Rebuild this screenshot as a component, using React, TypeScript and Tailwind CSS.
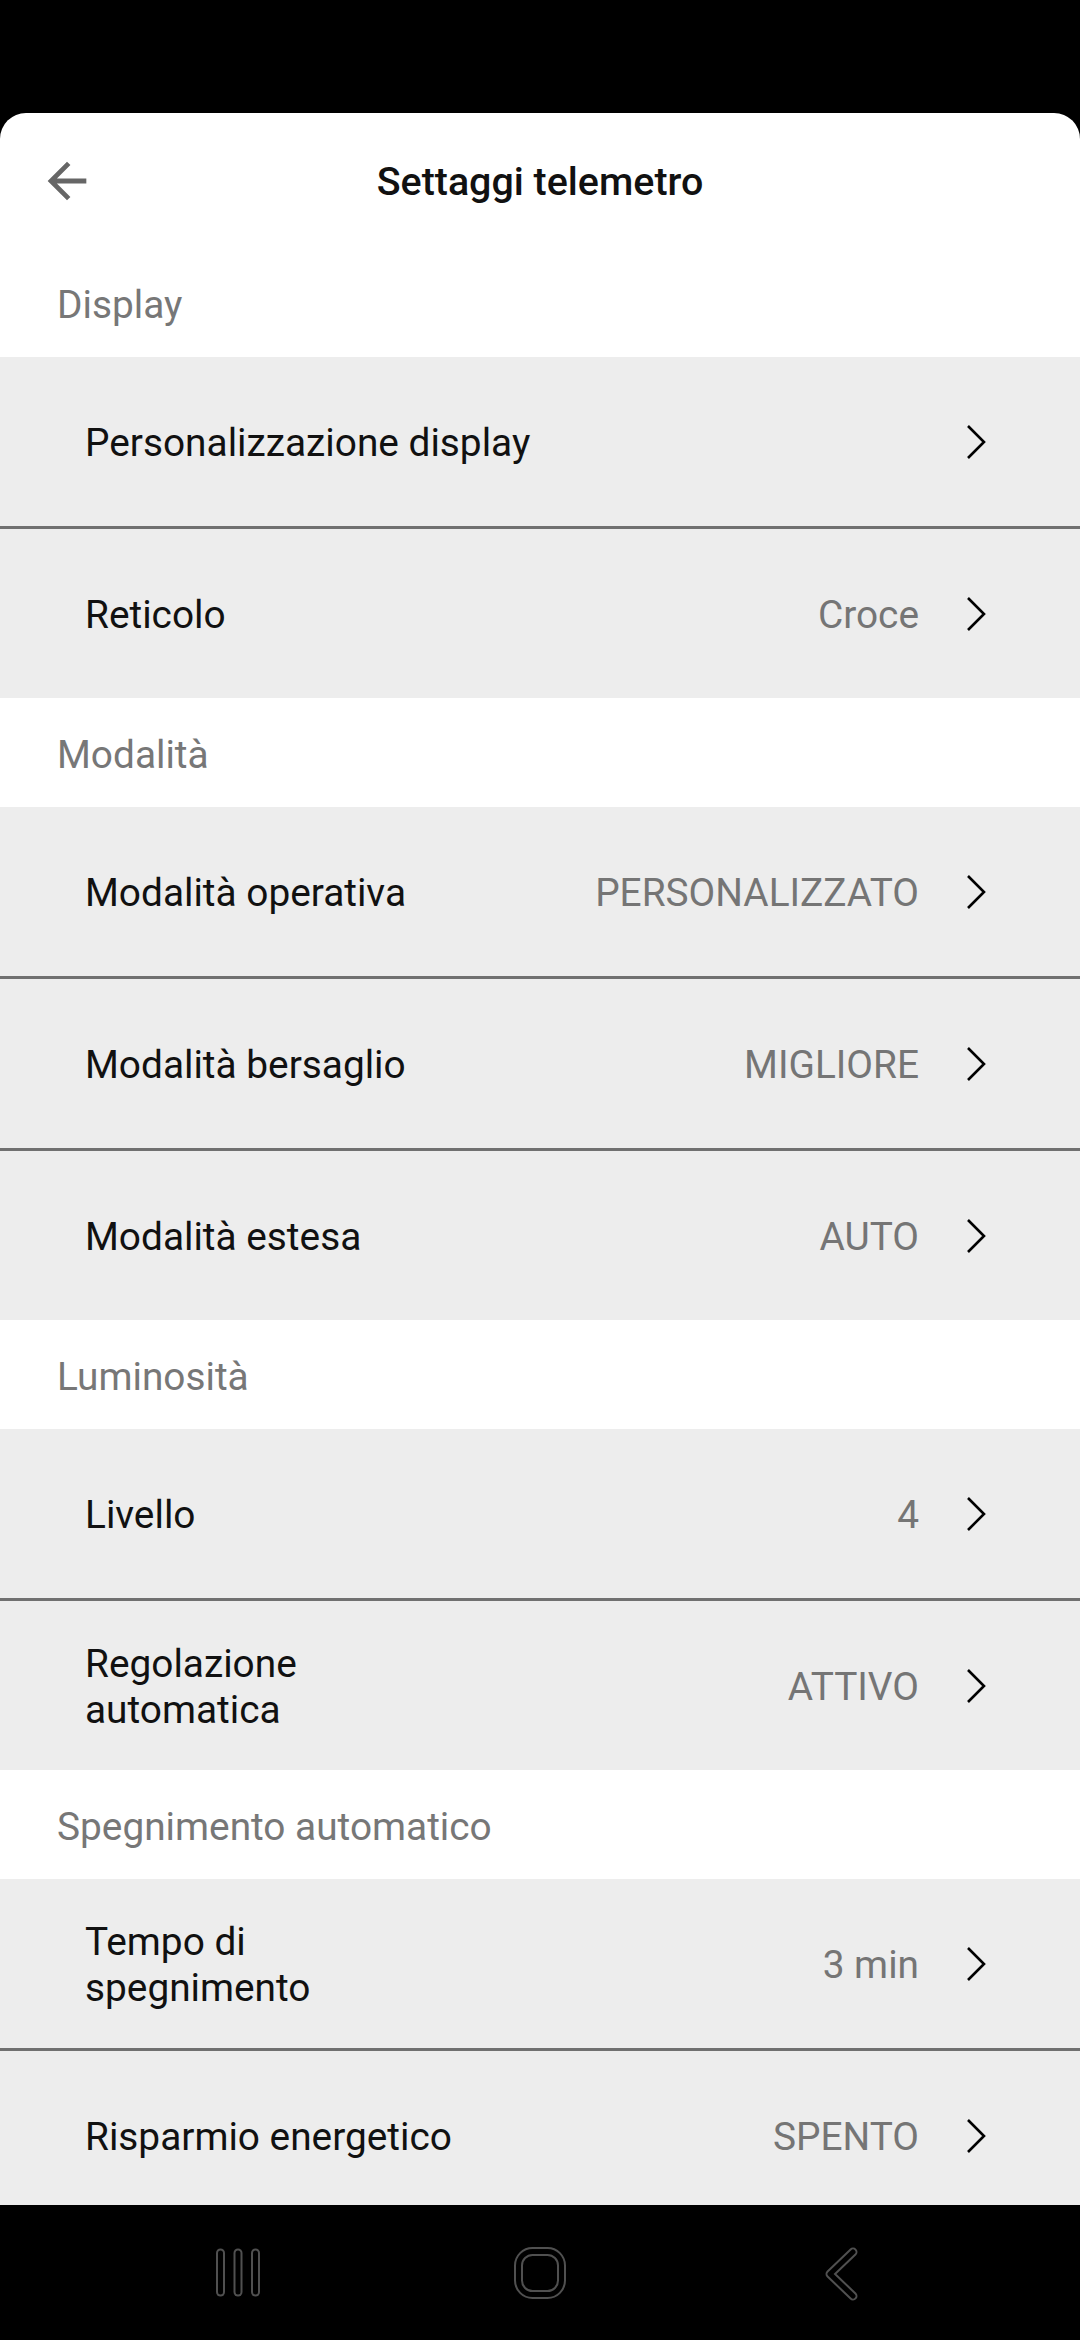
import React from 'react';

type Row = { label: string; value?: string };
type Section = { title: string; rows: Row[] };

const sections: Section[] = [
  {
    title: 'Display',
    rows: [{ label: 'Personalizzazione display' }, { label: 'Reticolo', value: 'Croce' }],
  },
  {
    title: 'Modalità',
    rows: [
      { label: 'Modalità operativa', value: 'PERSONALIZZATO' },
      { label: 'Modalità bersaglio', value: 'MIGLIORE' },
      { label: 'Modalità estesa', value: 'AUTO' },
    ],
  },
  {
    title: 'Luminosità',
    rows: [
      { label: 'Livello', value: '4' },
      { label: 'Regolazione automatica', value: 'ATTIVO' },
    ],
  },
  {
    title: 'Spegnimento automatico',
    rows: [
      { label: 'Tempo di spegnimento', value: '3 min' },
      { label: 'Risparmio energetico', value: 'SPENTO' },
    ],
  },
];

function Chevron() {
  return (
    <svg width="22" height="36" viewBox="0 0 22 36" className="shrink-0">
      <polyline points="3,2 19,18 3,34" fill="none" stroke="#000" strokeWidth="2.6" />
    </svg>
  );
}

function SettingRow({ row }: { row: Row }) {
  return (
    <div className="flex h-[169px] items-center bg-[#ededed] pl-[85px] pr-[93px]">
      <div className={`pt-[3px] text-[#111] leading-[46px] ${row.value ? 'max-w-[380px]' : ''}`}>{row.label}</div>
      <div className="flex-1" />
      {row.value && <div className="pt-[3px] text-[#757575] mr-[46px]">{row.value}</div>}
      <Chevron />
    </div>
  );
}

function NavBar() {
  return (
    <div className="h-[135px] bg-black shrink-0 grid grid-cols-3 items-center px-[87px]">
      {/* recents */}
      <div className="flex justify-center">
        <svg width="50" height="52" viewBox="0 0 50 52">
          {[7.5, 25, 42.5].map((x) => (
            <g key={x}>
              <line x1={x} y1="6" x2={x} y2="45" stroke="#505050" strokeWidth="9" strokeLinecap="round" />
              <line x1={x} y1="6" x2={x} y2="45" stroke="#000" strokeWidth="5" strokeLinecap="round" />
            </g>
          ))}
        </svg>
      </div>
      {/* home */}
      <div className="flex justify-center">
        <svg width="56" height="56" viewBox="0 0 56 56">
          <rect x="6.5" y="6.5" width="43" height="43" rx="14" fill="none" stroke="#505050" strokeWidth="9" />
          <rect x="6.5" y="6.5" width="43" height="43" rx="14" fill="none" stroke="#000" strokeWidth="5" />
        </svg>
      </div>
      {/* back */}
      <div className="flex justify-center">
        <svg width="44" height="56" viewBox="0 0 44 56">
          <polyline points="33,7 10,29 33,51" fill="none" stroke="#505050" strokeWidth="9" strokeLinecap="round" strokeLinejoin="round" />
          <polyline points="33,7 10,29 33,51" fill="none" stroke="#000" strokeWidth="5" strokeLinecap="round" strokeLinejoin="round" />
        </svg>
      </div>
    </div>
  );
}

export default function App() {
  return (
    <div className="h-[2340px] w-[1080px] bg-black flex flex-col font-['Roboto',sans-serif] text-[38.8px]">
      <div className="h-[113px] shrink-0" />
      <main className="flex-1 overflow-hidden bg-white rounded-t-[26px]">
        {/* Header */}
        <header className="grid h-[135px] grid-cols-[1fr_auto_1fr] items-center">
          <div className="pl-[38px]">
            <svg width="58" height="58" viewBox="0 0 24 24">
              <path
                d="M20 11H7.83l5.59-5.59L12 4l-8 8 8 8 1.41-1.41L7.83 13H20v-2z"
                fill="#666"
              />
            </svg>
          </div>
          <h1 className="pt-[3px] font-medium text-[#111] text-[39.4px]">Settaggi telemetro</h1>
          <div />
        </header>

        {sections.map((section) => (
          <section key={section.title}>
            <div className="flex h-[109px] items-center pl-[57px] pt-[5px] text-[#777]">{section.title}</div>
            {section.rows.map((row, i) => (
              <div key={row.label}>
                {i > 0 && <div className="h-[3px] bg-[#707070]" />}
                <SettingRow row={row} />
              </div>
            ))}
          </section>
        ))}
      </main>
      <NavBar />
    </div>
  );
}
